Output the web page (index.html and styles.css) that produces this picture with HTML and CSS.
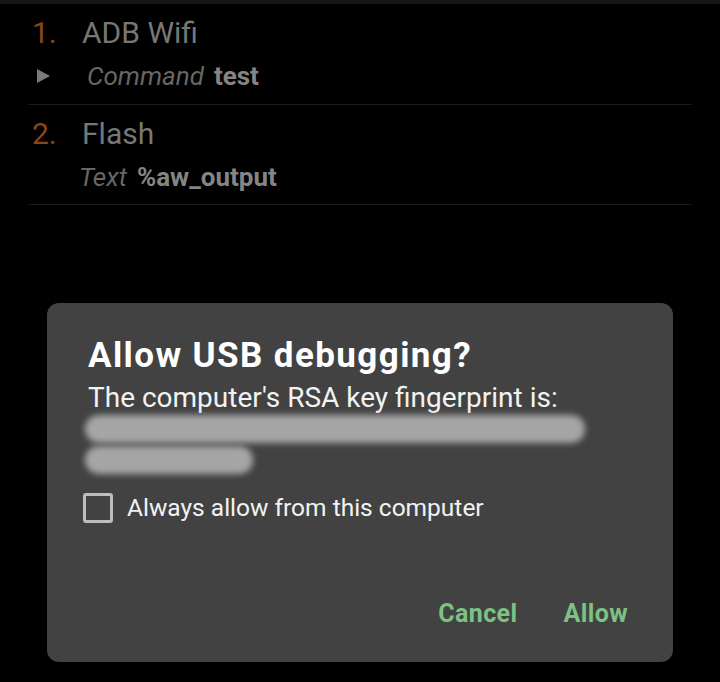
FILE: index.html
```html
<!DOCTYPE html>
<html lang="en">
<head>
<meta charset="utf-8">
<title>Allow USB debugging</title>
<link rel="stylesheet" href="styles.css">
</head>
<body>
<div class="topbar"></div>
<div class="list">
  <div class="item">
    <div class="item-head"><span class="num">1.</span><span class="name">ADB Wifi</span></div>
    <div class="item-sub with-arrow"><span class="arrow"></span><span class="key">Command</span><span class="val">test</span></div>
  </div>
  <div class="item">
    <div class="item-head"><span class="num">2.</span><span class="name">Flash</span></div>
    <div class="item-sub plain"><span class="key">Text</span><span class="val">%aw_output</span></div>
  </div>
</div>
<div class="dialog">
  <div class="title">Allow USB debugging?</div>
  <div class="message">The computer's RSA key fingerprint is:</div>
  <div class="smear">
    <div class="smear-line long"></div>
    <div class="smear-line short"></div>
  </div>
  <label class="check-row"><span class="checkbox"></span><span class="check-label">Always allow from this computer</span></label>
  <div class="actions">
    <span class="btn">Cancel</span>
    <span class="btn">Allow</span>
  </div>
</div>
</body>
</html>
```
FILE: styles.css
```css
html, body {
  margin: 0;
  padding: 0;
  background: #000;
  font-family: Roboto, "Noto Sans", sans-serif;
}
body {
  width: 720px;
  height: 682px;
  overflow: hidden;
}
.topbar {
  height: 4px;
  background: #161616;
}
.list {
  padding: 0 28px;
}
.item {
  height: 89px;
  padding-top: 11px;
  border-bottom: 1px solid #1a1a1a;
}
.item:last-child {
  height: 88px;
}
.item-head {
  display: flex;
  font-size: 30px;
  line-height: 36px;
  padding-left: 4px;
}
.num {
  width: 50px;
  color: #8a4613;
}
.name {
  color: #777;
}
.item-sub {
  display: flex;
  align-items: center;
  margin-top: 10px;
  font-size: 26px;
  line-height: 30px;
}
.item-sub.plain {
  padding-left: 51px;
}
.arrow {
  width: 0;
  height: 0;
  margin-left: 9px;
  margin-right: 37px;
  border-top: 7px solid transparent;
  border-bottom: 7px solid transparent;
  border-left: 13px solid #7a7a7a;
}
.key {
  font-style: italic;
  color: #666;
  margin-right: 10px;
}
.val {
  font-weight: 700;
  color: #858585;
}
.dialog {
  margin: 98px 0 0 47px;
  width: 626px;
  box-sizing: border-box;
  padding: 33px 45px 33px 41px;
  background: #424242;
  border-radius: 12px;
  color: #fff;
}
.title {
  font-size: 35px;
  line-height: 40px;
  font-weight: 700;
  letter-spacing: 1.4px;
}
.message {
  margin-top: 6px;
  font-size: 28px;
  line-height: 32px;
  color: #f2f2f2;
}
.smear {
  margin: 1px 0 0 -3px;
  height: 60px;
}
.smear-line {
  height: 28px;
  border-radius: 14px;
  background: repeating-linear-gradient(90deg, #b0b0b0 0 2px, #9c9c9c 2px 4px);
  filter: blur(3px);
}
.smear-line.long {
  width: 500px;
}
.smear-line.short {
  width: 168px;
  margin-top: 3px;
}
.check-row {
  display: flex;
  align-items: center;
  margin: 18px 0 0 -5px;
  font-size: 24.5px;
  line-height: 30px;
}
.checkbox {
  width: 30px;
  height: 30px;
  box-sizing: border-box;
  border: 3px solid #bdbdbd;
  border-radius: 3px;
  margin-right: 14px;
}
.check-label {
  color: #f2f2f2;
}
.actions {
  display: flex;
  justify-content: flex-end;
  gap: 46px;
  margin-top: 76px;
  font-size: 25px;
  line-height: 30px;
  font-weight: 700;
  letter-spacing: 0.4px;
  color: #7cc383;
}
```
